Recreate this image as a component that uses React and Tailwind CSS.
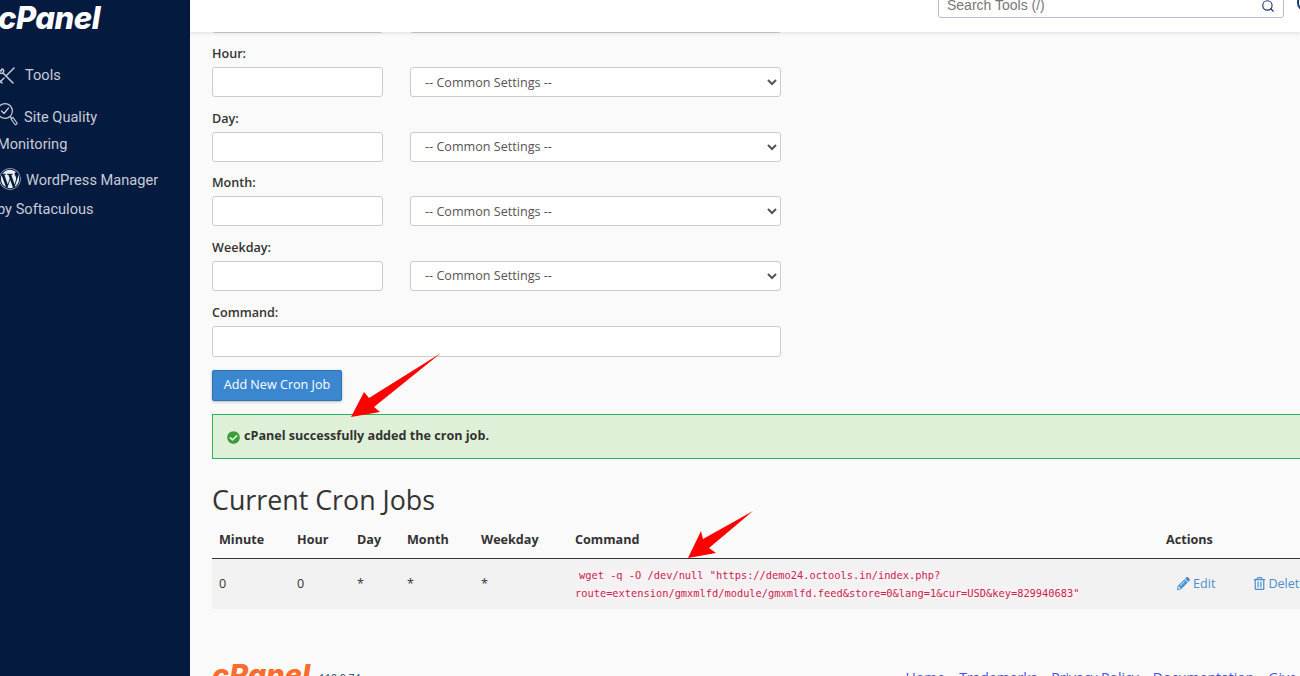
import { Search } from "lucide-react";
import { FaCheckCircle, FaPencilAlt, FaRegTrashAlt, FaWordpress } from "react-icons/fa";

const rows = ["Hour", "Day", "Month", "Weekday"];

function CronRow({ label }) {
  return (
    <div className="mb-[10.67px]">
      <label className="block h-[24px] text-[12.6px] leading-[22px] font-semibold text-[#333]">{label}:</label>
      <div className="flex gap-[27px] h-[30px]">
        <input className="w-[171px] rounded-[3px] border border-[#ccc] bg-white" />
        <select className="w-[371px] rounded-[3px] border border-[#ccc] bg-white pl-[10px] text-[12.6px] text-[#555]">
          <option>-- Common Settings --</option>
        </select>
      </div>
    </div>
  );
}

function Sidebar() {
  return (
    <aside className="w-[190px] shrink-0 bg-[#051a3f] text-[14.6px] text-[#c6ccd8] font-['Roboto',sans-serif] overflow-hidden">
      <div className="-ml-[2px] -mt-[6px] h-[48px] text-[31px] leading-[48px] font-extrabold italic text-white font-['Inter',sans-serif] tracking-[-0.5px]">cPanel</div>
      <div className="mt-[22px] h-[24px] flex items-center gap-[10px] -ml-[3px]">
        <svg width="18" height="18" viewBox="0 0 18 18" fill="none" stroke="currentColor" strokeWidth="1.5" strokeLinecap="round">
          <path d="M17 1 L9 9 M7 11 L3 15 M2 13 L5 16" />
          <path d="M6 6 L16 16 M6 6 C4 7 2 6 2 3 L4 4 L5 2 C7 2 7 4 6 6" />
        </svg>
        <span>Tools</span>
      </div>
      <div className="mt-[16px] -ml-[3px] leading-[27px]">
        <svg width="21" height="23" viewBox="0 0 21 23" fill="none" stroke="currentColor" strokeWidth="1.2" strokeLinecap="round" strokeLinejoin="round" className="inline -mt-[8px] mr-[6px]">
          <circle cx="8" cy="8" r="7.4" />
          <path d="M4.5 8 L7 10.5 L11.5 5" />
          <path d="M13 13.5 L14.5 15 M14 16 L16 14.5 L20 20 A1.4 1.4 0 0 1 18 21.5 Z" />
        </svg>
        Site Quality
        <br />
        Monitoring
      </div>
      <div className="mt-[8px] -ml-[3px] leading-[29px]">
        <FaWordpress size={22} className="inline -mt-[4px] ml-[2px] mr-[5px] text-[#e8ebf0]" />
        WordPress Manager
        <br />
        by Softaculous
      </div>
    </aside>
  );
}

function CronTable() {
  return (
    <table className="table-fixed w-[1300px] border-collapse text-[12.6px] text-[#333]">
      <colgroup>
        <col className="w-[78px]" />
        <col className="w-[60px]" />
        <col className="w-[50px]" />
        <col className="w-[74px]" />
        <col className="w-[94px]" />
        <col className="w-[591px]" />
        <col />
      </colgroup>
      <thead>
        <tr className="h-[38px] border-b border-[#333] text-left">
          {["Minute", "Hour", "Day", "Month", "Weekday", "Command", "Actions"].map((h) => (
            <th key={h} className="pl-[7px] pt-[3px] font-bold">{h}</th>
          ))}
        </tr>
      </thead>
      <tbody>
        <tr className="h-[50px] bg-[#f2f2f2]">
          <td className="pl-[7px] pt-[2px]">0</td>
          <td className="pl-[7px] pt-[2px]">0</td>
          <td className="pl-[7px] pt-[2px]">*</td>
          <td className="pl-[7px] pt-[2px]">*</td>
          <td className="pl-[7px] pt-[2px]">*</td>
          <td className="pl-[7px] pr-[70px] leading-[18px]">
            <code className="bg-[#f9f2f4] pl-[4px] text-[10.35px] text-[#c7254e] font-['DejaVu_Sans_Mono',monospace]">
              {'wget -q -O /dev/null "https://demo24.octools.in/index.php?route=extension/gmxmlfd/module/gmxmlfd.feed&store=0&lang=1&cur=USD&key=829940683"'}
            </code>
          </td>
          <td className="pl-[18px] pt-[2px] text-[#4a90d0] whitespace-nowrap">
            <FaPencilAlt size={13} className="inline -mt-[3px] mr-[3px]" />
            Edit
            <FaRegTrashAlt size={13} className="inline -mt-[3px] ml-[38px] mr-[2px]" />
            Delete
          </td>
        </tr>
      </tbody>
    </table>
  );
}

export default function App() {
  return (
    <div className="relative flex h-[676px] w-[1300px] overflow-hidden bg-[#fafafa] font-['Open_Sans',sans-serif]">
      <Sidebar />
      <div className="relative flex-1 min-w-0">
        <header className="relative z-10 flex h-[32px] justify-end bg-white shadow-[0_1px_4px_rgba(0,0,0,0.12)]">
          <div className="-mt-[14px] flex h-[32px] w-[346px] shrink-0 items-center justify-between rounded-[3px] border border-[#b4bdd0] bg-white px-[8px] text-[14px] text-[#777] font-['Liberation_Sans',sans-serif]">
            <span className="pt-[7px]">Search Tools (/)</span>
            <Search size={14} className="mt-[7px] text-[#1d3b6d]" />
          </div>
          <div className="-mt-[6px] ml-[13px] -mr-[13px] h-[17px] w-[16px] shrink-0 rounded-full border-2 border-[#1d3b6d]" />
        </header>
        <main className="pl-[22px]">
          <div className="-mt-[29px] mb-[10px] flex gap-[27px] h-[30px]">
            <div className="w-[171px] rounded-[3px] border border-[#ccc] bg-white" />
            <div className="w-[371px] rounded-[3px] border border-[#ccc] bg-white" />
          </div>
          {rows.map((r) => (
            <CronRow key={r} label={r} />
          ))}
          <label className="block h-[24px] text-[12.6px] leading-[22px] font-semibold text-[#333]">Command:</label>
          <input className="block h-[31px] w-[569px] rounded-[3px] border border-[#ccc] bg-white" />
          <button className="mt-[13px] block h-[31px] w-[130px] rounded-[2px] border border-[#2d72b0] bg-[#3a87d0] text-[12.6px] text-white shadow-[0_1px_3px_rgba(0,0,0,0.25)]">
            Add New Cron Job
          </button>
          <div className="mt-[13px] flex h-[45px] w-[1200px] items-center gap-[4px] border border-[#2bb35c] bg-[#dff0d8] pl-[14px] pt-[1px] text-[12.6px] font-bold text-[#333]">
            <FaCheckCircle size={13} className="mt-[2px] text-[#3a9d3a]" />
            cPanel successfully added the cron job.
          </div>
          <h2 className="mt-[22px] h-[40px] text-[26.8px] leading-[38px] text-[#333]">Current Cron Jobs</h2>
          <CronTable />
          <div className="mt-[51px] flex w-[1300px] items-start">
            <div className="w-[107px] shrink-0 text-[29px] leading-[30px] font-extrabold italic text-[#ff6c2c] font-['Inter',sans-serif]">cPanel</div>
            <span className="mt-[11px] shrink-0 text-[10.5px] text-[#1d3b6d]">110.0.74</span>
            <nav className="ml-[545px] mt-[7px] flex shrink-0 gap-[14px] whitespace-nowrap text-[14px] text-[#4a4ae8]">
              <a>Home</a>
              <a>Trademarks</a>
              <a>Privacy Policy</a>
              <a>Documentation</a>
              <a>Give Feedback</a>
            </nav>
          </div>
        </main>
      </div>
      <svg className="pointer-events-none absolute left-0 top-0 z-20" width="1300" height="676">
        <polygon fill="#ff0000" points="441,353 374,407 380,412 351,417 364,392 369,398" />
        <polygon fill="#ff0000" points="753,511 709,548 716,553 688,558 701,531 703,539" />
      </svg>
    </div>
  );
}
